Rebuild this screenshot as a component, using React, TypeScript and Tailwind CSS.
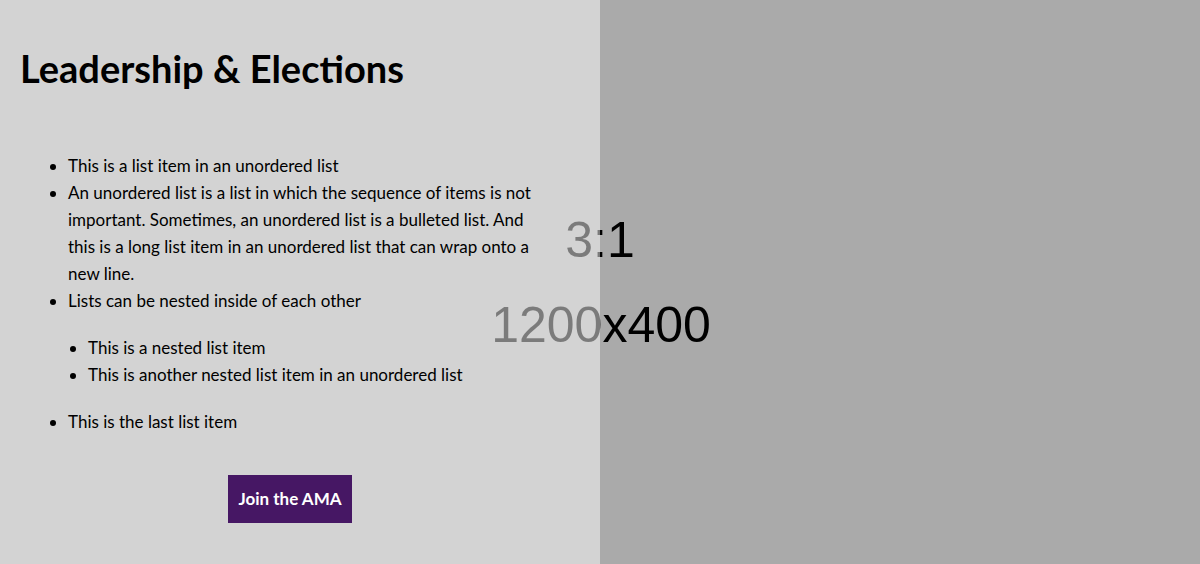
import React from "react";

export default function App() {
  return (
    <div className="relative w-[1200px] h-[564px] overflow-hidden bg-[#aaaaaa]" style={{ fontFamily: "Lato, 'Open Sans', sans-serif" }}>
      <svg className="absolute inset-0" width="1200" height="564" viewBox="0 0 1200 564">
        <rect width="1200" height="564" fill="#aaaaaa" />
        <text x="600" y="257" textAnchor="middle" fontFamily="'Liberation Sans', Arial, sans-serif" fontSize="50" fill="#000">3:1</text>
        <text x="601" y="342" textAnchor="middle" fontFamily="'Liberation Sans', Arial, sans-serif" fontSize="50" fill="#000">1200x400</text>
      </svg>
      <div className="relative w-[600px] h-[564px] bg-[rgba(255,255,255,0.482)] px-[20px] pt-[45px] text-black">
        <h1 className="text-[38px] leading-[46px] font-bold">Leadership &amp; Elections</h1>
        <ul className="mt-[61px] pl-[48px] list-disc text-[17px] leading-[27px] w-[560px]">
          <li>This is a list item in an unordered list</li>
          <li>
            An unordered list is a list in which the sequence of items is not<br />
            important. Sometimes, an unordered list is a bulleted list. And<br />
            this is a long list item in an unordered list that can wrap onto a<br />
            new line.
          </li>
          <li>
            Lists can be nested inside of each other
            <ul className="my-[20px] pl-[20px] list-disc">
              <li>This is a nested list item</li>
              <li>This is another nested list item in an unordered list</li>
            </ul>
          </li>
          <li>This is the last list item</li>
        </ul>
        <div className="w-[540px] flex justify-center mt-[40px]">
          <button className="w-[124px] h-[48px] bg-[#461764] text-white font-bold text-[17px]">Join the AMA</button>
        </div>
      </div>
    </div>
  );
}
